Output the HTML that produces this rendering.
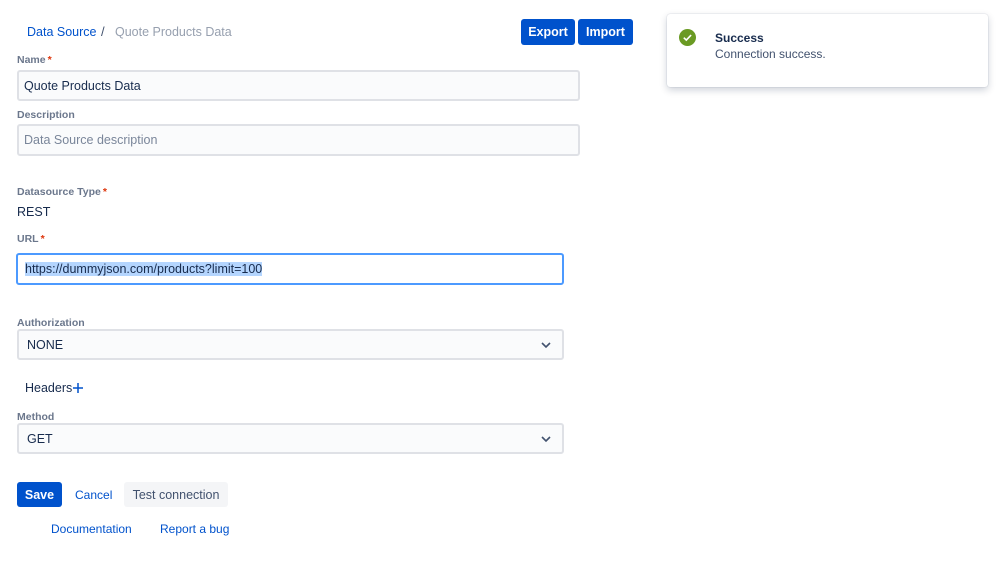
<!DOCTYPE html>
<html><head><style>
*{box-sizing:border-box;margin:0;padding:0}
body{width:999px;height:563px;background:#fff;font-family:"Liberation Sans",sans-serif;color:#172b4d;position:relative;overflow:hidden;font-size:12px}
.a{position:absolute;white-space:nowrap}
.lbl{font-size:10.5px;font-weight:bold;color:#6b778c}
.lbl b{color:#de350b;margin-left:2px}
.inp{position:absolute;background:#fafbfc;border:2px solid #dfe1e6;border-radius:3px;padding-left:5px;display:flex;align-items:center;font-size:12.5px}
.btn{position:absolute;background:#0052cc;color:#fff;font-weight:bold;font-size:12.5px;border-radius:3px;display:flex;align-items:center;justify-content:center}
.link{color:#0052cc;font-size:12px}
.chev{position:absolute;right:10px;top:9px}
</style></head><body>
<div class="a link" style="left:27px;top:25px;font-size:12.5px">Data Source</div>
<div class="a" style="left:101px;top:24px;font-size:13px;color:#42526e">/</div>
<div class="a" style="left:115px;top:25px;font-size:12.5px;color:#97a0af">Quote Products Data</div>
<div class="btn" style="left:521px;top:19px;width:54px;height:26px">Export</div>
<div class="btn" style="left:578px;top:19px;width:55px;height:26px">Import</div>

<div class="a lbl" style="left:17px;top:54px">Name<b>*</b></div>
<div class="inp" style="left:17px;top:70px;width:563px;height:31px">Quote Products Data</div>
<div class="a lbl" style="left:17px;top:109px">Description</div>
<div class="inp" style="left:17px;top:124px;width:563px;height:32px;color:#7a869a">Data Source description</div>

<div class="a lbl" style="left:17px;top:186px">Datasource Type<b>*</b></div>
<div class="a" style="left:17px;top:205px;font-size:12.5px">REST</div>
<div class="a lbl" style="left:17px;top:233px">URL<b>*</b></div>
<div class="inp" style="left:16px;top:253px;width:548px;height:32px;border-color:#4c9aff;background:#fff;padding-left:7px"><span style="background:#b4d5fe">https://dummyjson.com/products?limit=100</span></div>

<div class="a lbl" style="left:17px;top:317px">Authorization</div>
<div class="inp" style="left:17px;top:329px;width:547px;height:31px;padding-left:8px">NONE<svg class="chev" width="12" height="10" viewBox="0 0 12 10"><path d="M2 3l4 4 4-4" fill="none" stroke="#42526e" stroke-width="1.6"/></svg></div>

<div class="a" style="left:25px;top:381px;font-size:12.5px">Headers</div>
<svg class="a" style="left:72px;top:382px" width="12" height="12" viewBox="0 0 12 12"><path d="M6 1v10M1 6h10" stroke="#0052cc" stroke-width="1.5"/></svg>

<div class="a lbl" style="left:17px;top:411px">Method</div>
<div class="inp" style="left:17px;top:423px;width:547px;height:31px;padding-left:8px">GET<svg class="chev" width="12" height="10" viewBox="0 0 12 10"><path d="M2 3l4 4 4-4" fill="none" stroke="#42526e" stroke-width="1.6"/></svg></div>

<div class="btn" style="left:17px;top:482px;width:45px;height:25px">Save</div>
<div class="a link" style="left:75px;top:488px">Cancel</div>
<div class="a" style="left:124px;top:482px;width:104px;height:25px;background:#f4f5f7;border-radius:3px;color:#42526e;font-size:12.5px;display:flex;align-items:center;justify-content:center">Test connection</div>
<div class="a link" style="left:51px;top:522px">Documentation</div>
<div class="a link" style="left:160px;top:522px">Report a bug</div>

<div class="a" style="left:667px;top:14px;width:321px;height:73px;background:#fff;border-radius:3px;box-shadow:0 3px 8px rgba(9,30,66,.2),0 0 1px rgba(9,30,66,.3)">
<svg class="a" style="left:12px;top:15px" width="17" height="17" viewBox="0 0 17 17"><circle cx="8.5" cy="8.5" r="8.5" fill="#6a9a23"/><path d="M4.8 8.7l2.5 2.4 4.8-5" fill="none" stroke="#fff" stroke-width="1.6"/></svg>
<div class="a" style="left:48px;top:17px;font-weight:bold;font-size:12px">Success</div>
<div class="a" style="left:48px;top:33px;font-size:12px;color:#42526e">Connection success.</div>
</div>
</body></html>
